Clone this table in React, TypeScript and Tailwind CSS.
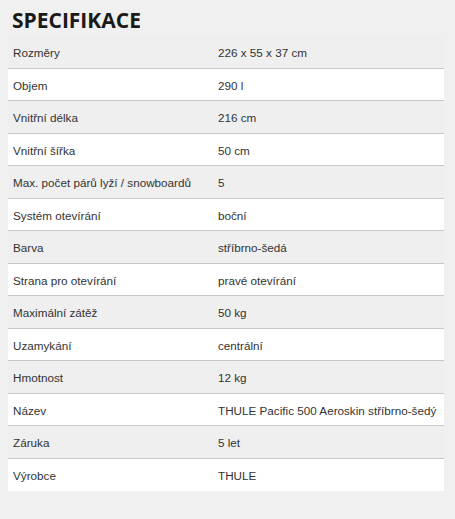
const rows: [string, string][] = [
  ["Rozměry", "226 x 55 x 37 cm"],
  ["Objem", "290 l"],
  ["Vnitřní délka", "216 cm"],
  ["Vnitřní šířka", "50 cm"],
  ["Max. počet párů lyží / snowboardů", "5"],
  ["Systém otevírání", "boční"],
  ["Barva", "stříbrno-šedá"],
  ["Strana pro otevírání", "pravé otevírání"],
  ["Maximální zátěž", "50 kg"],
  ["Uzamykání", "centrální"],
  ["Hmotnost", "12 kg"],
  ["Název", "THULE Pacific 500 Aeroskin stříbrno-šedý"],
  ["Záruka", "5 let"],
  ["Výrobce", "THULE"],
];

export default function App() {
  return (
    <div className="w-[455px] h-[519px] bg-[#f0f0f0] pt-[6px] px-2">
      <h2 className="pl-1 text-[21px] leading-[28px] font-bold text-[#1a1a1a] font-['Open_Sans',sans-serif]">
        SPECIFIKACE
      </h2>
      <div className="mt-[2px] w-[436px] font-['Liberation_Sans',Arial,sans-serif] text-[11.7px] text-[#333]">
        {rows.map(([label, value], i) => (
          <div
            key={label}
            className={`flex items-center h-[32.5px] pt-[3px] ${i % 2 ? "bg-white" : "bg-[#efefef]"} ${
              i < rows.length - 1 ? "border-b border-[#c8c8c8]" : ""
            }`}
          >
            <div className="w-[205px] pl-[5px]">{label}</div>
            <div className="pl-[5px]">{value}</div>
          </div>
        ))}
      </div>
    </div>
  );
}
